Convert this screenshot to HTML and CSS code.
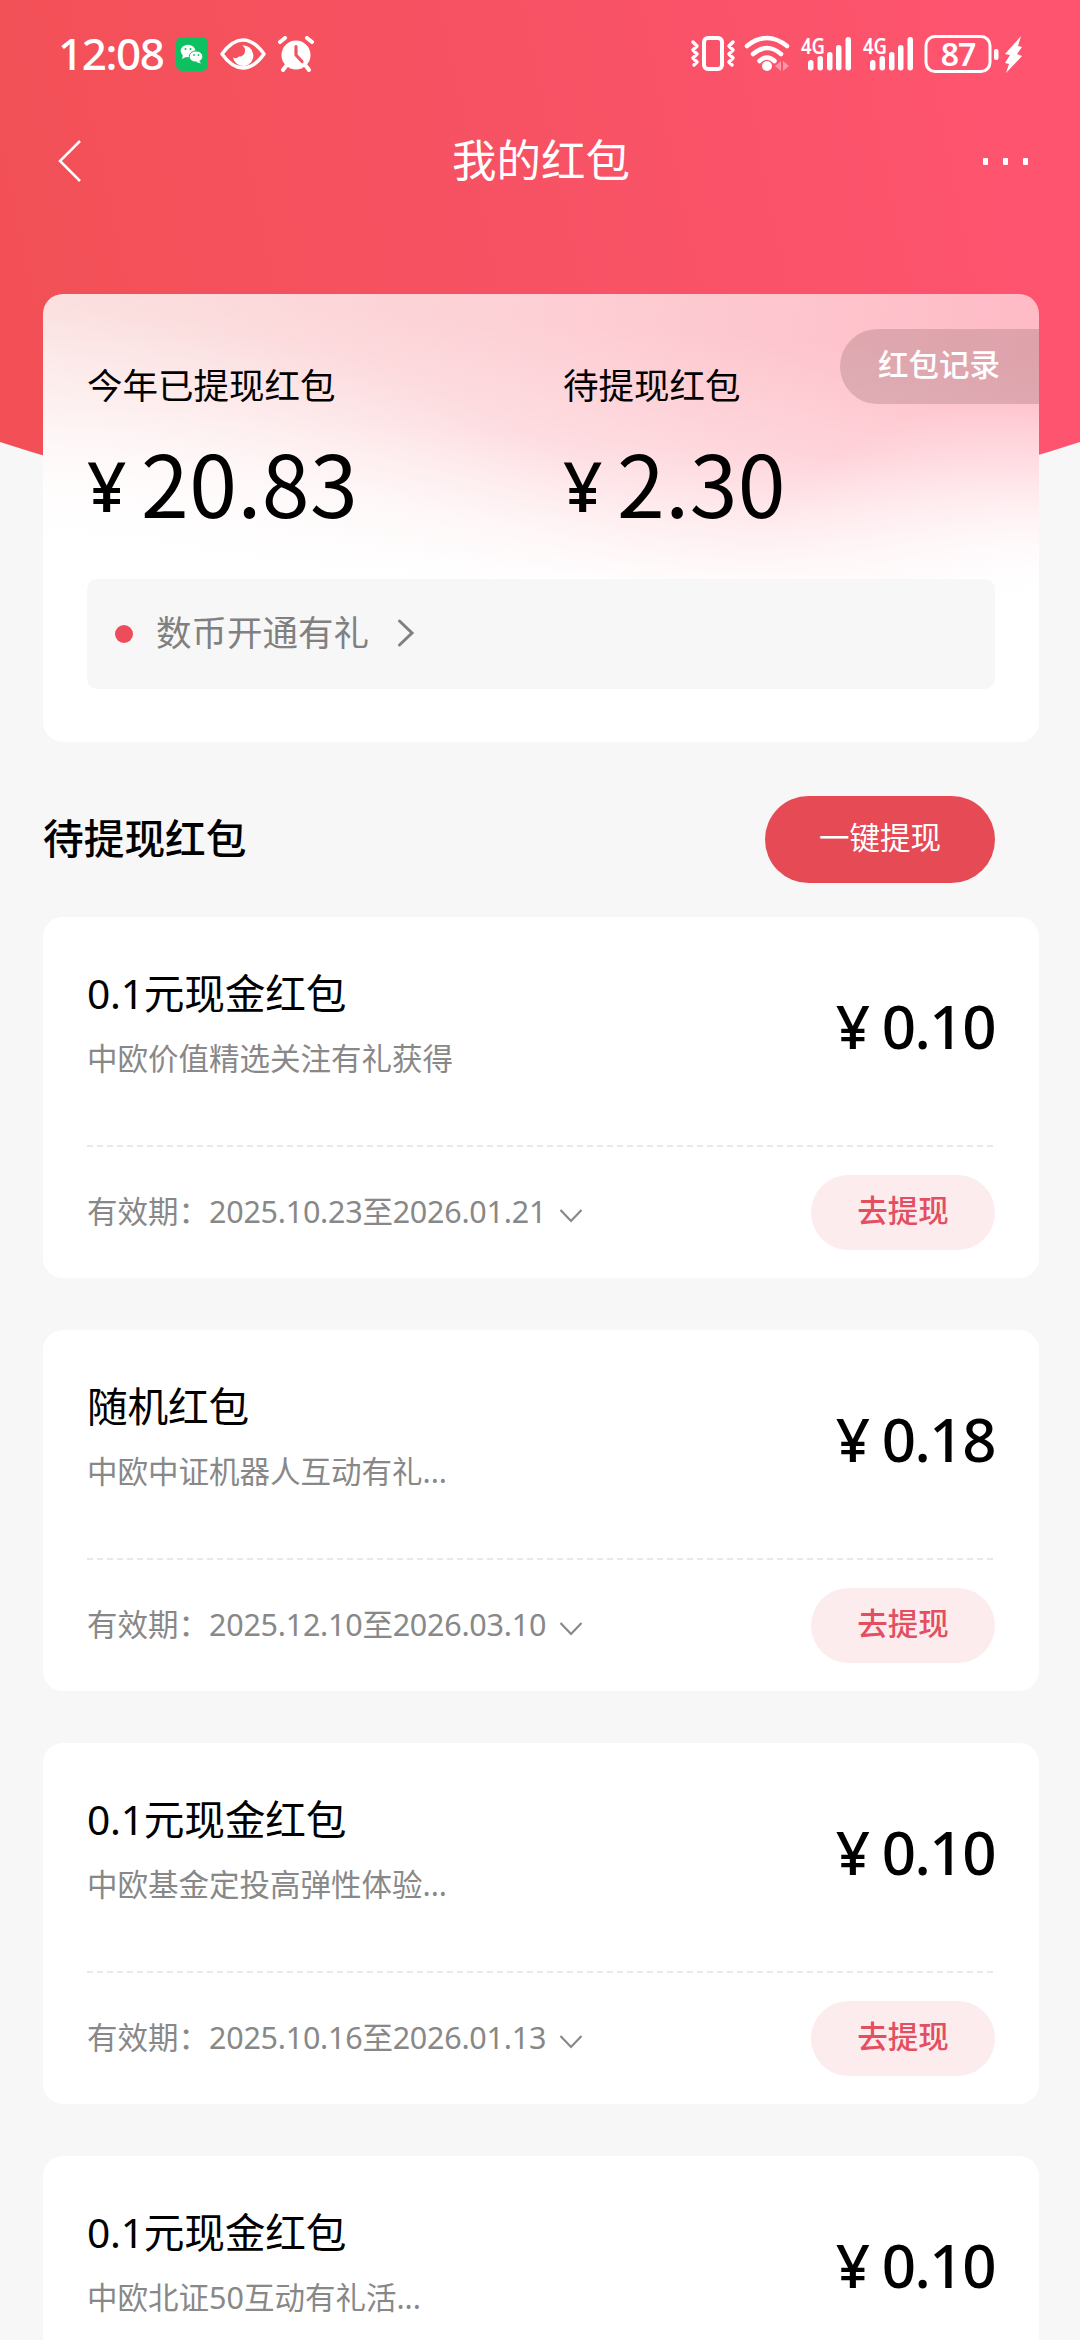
FILE: index.html
```html
<!DOCTYPE html>
<html lang="zh-CN">
<head>
<meta charset="utf-8">
<title>我的红包</title>
<link rel="stylesheet" href="styles.css">
</head>
<body>
<div class="page">
  <svg class="hero" width="1080" height="540" viewBox="0 0 1080 540">
    <defs>
      <linearGradient id="heroFill" gradientUnits="userSpaceOnUse" x1="0" y1="300" x2="1060" y2="80">
        <stop offset="0" stop-color="#f25056"/>
        <stop offset="0.5" stop-color="#f75264"/>
        <stop offset="1" stop-color="#ff5470"/>
      </linearGradient>
    </defs>
    <path d="M0 0H1080V442Q810 530 540 530T0 442Z" fill="url(#heroFill)"/>
  </svg>

  <header class="status">
    <div class="status-left">
      <span class="clock">12:08</span>
      <svg width="34" height="34" viewBox="0 0 34 34"><rect x="1" y="0" width="32" height="34" rx="6" fill="#0dc160"/><ellipse cx="13" cy="14" rx="7.300" ry="6.300" fill="#fff"/><path d="M8 18l-1 4 4-2z" fill="#fff"/><ellipse cx="21" cy="19.500" rx="6.800" ry="5.600" fill="#fff" stroke="#0dc160" stroke-width="1"/><path d="M24 23.500l2 3-5-1.500z" fill="#fff"/><g fill="#0dc160"><circle cx="10.500" cy="12" r="1"/><circle cx="15.500" cy="12" r="1"/><circle cx="19" cy="18" r=".9"/><circle cx="23.500" cy="18" r=".9"/></g></svg>
      <svg class="eye" width="46" height="34" viewBox="0 0 46 34"><path d="M2 17Q12 3 23 3T44 17Q34 31 23 31T2 17Z" fill="none" stroke="#fff" stroke-width="3.500" stroke-linejoin="round"/><path d="M22 8.500A10.300 10.300 0 1 1 13 20.500A5 5 0 0 0 19 19.500A5.500 5.500 0 0 0 25 14.500A5.500 5.500 0 0 0 22 8.500Z" fill="#fff"/></svg>
      <svg class="alarm" width="36" height="36" viewBox="0 0 36 36"><circle cx="18" cy="19" r="14.500" fill="#fff"/><path d="M2 6L7 2M34 6L29 2M8 30L5 34M28 30L31 34" stroke="#fff" stroke-width="4" stroke-linecap="round"/><path d="M18 10.500V19L24 25.500" fill="none" stroke="#f45360" stroke-width="3.200" stroke-linecap="round" stroke-linejoin="round"/></svg>
    </div>
    <svg class="status-right" width="334" height="40" viewBox="0 0 334 40" fill="#fff">
      <rect x="13" y="4" width="18" height="31" rx="4" fill="none" stroke="#fff" stroke-width="4"/>
      <path d="M2 8l4 4-4 4 4 4-4 4 4 4-3 3M42 8l-4 4 4 4-4 4 4 4-4 4 3 3" fill="none" stroke="#fff" stroke-width="3.500" stroke-linejoin="round" stroke-linecap="round"/>
      <path d="M56 12Q76-4 96 12M62 20Q76 8 90 20M68.500 27Q76 20 83.500 27" fill="none" stroke="#fff" stroke-width="4.500" stroke-linecap="round"/>
      <circle cx="76" cy="32" r="5"/>
      <path d="M84 32l6-5v10zM98 32l-6-5v10z" opacity=".4"/>
      <g id="bars">
        <rect x="117" y="26" width="5.500" height="10.500" rx="2.700"/><rect x="126.500" y="22" width="5.500" height="14.500" rx="2.700"/><rect x="136" y="18" width="5.500" height="18.500" rx="2.700"/><rect x="145" y="11" width="5.500" height="25.500" rx="2.700"/><rect x="154.500" y="3" width="5.500" height="33.500" rx="2.700"/>
      </g>
      <use href="#bars" x="62"/>
      <text class="net" x="110" y="19.500" textLength="24" lengthAdjust="spacingAndGlyphs">4G</text>
      <text class="net" x="172" y="19.500" textLength="24" lengthAdjust="spacingAndGlyphs">4G</text>
      <rect x="235" y="2.500" width="64" height="35" rx="9" fill="none" stroke="#fff" stroke-width="3"/>
      <text class="battery" x="267" y="31.500" text-anchor="middle">87</text>
      <rect x="303" y="15" width="4.500" height="11" rx="2"/>
      <path d="M330 2L314 20l5 1-5 8 4 1-3 9L331 22l-5-2 5-7-4-1z"/>
    </svg>
  </header>

  <nav class="navbar">
    <svg width="24" height="44" viewBox="0 0 24 44"><path d="M22 2L2 22L22 42" fill="none" stroke="#fff" stroke-width="2.500"/></svg>
    <h1 class="nav-title">我的红包</h1>
    <span class="more"><i></i><i></i><i></i></span>
  </nav>

  <main class="content">
    <section class="summary">
      <div class="totals">
        <div class="total">
          <div class="label">今年已提现红包</div>
          <div class="sum"><span class="yen">¥</span><span class="digits">20.83</span></div>
        </div>
        <div class="total">
          <div class="label">待提现红包</div>
          <div class="sum"><span class="yen">¥</span><span class="digits">2.30</span></div>
        </div>
        <div class="record">红包记录</div>
      </div>
      <div class="promo">
        <span class="dot"></span>
        <span>数币开通有礼</span>
        <svg width="18" height="30" viewBox="0 0 18 30"><path d="M2.500 3L15 15L2.500 27" fill="none" stroke="#808080" stroke-width="3" stroke-linecap="round"/></svg>
      </div>
    </section>

    <div class="section-head">
      <h2>待提现红包</h2>
      <div class="withdraw-all">一键提现</div>
    </div>

    <section class="list">
      <article class="item">
        <div class="item-top">
          <div><div class="name">0.1元现金红包</div><div class="source">中欧价值精选关注有礼获得</div></div>
          <div class="amount"><span class="yen">¥</span><span>0.10</span></div>
        </div>
        <div class="item-bottom">
          <div class="valid">有效期：<span class="dates">2025.10.23至2026.01.21</span><svg width="24" height="16" viewBox="0 0 24 16"><path d="M1.500 2L12 13L22.500 2" fill="none" stroke="#888" stroke-width="2.200"/></svg></div>
          <div class="withdraw">去提现</div>
        </div>
      </article>
      <article class="item">
        <div class="item-top">
          <div><div class="name">随机红包</div><div class="source">中欧中证机器人互动有礼...</div></div>
          <div class="amount"><span class="yen">¥</span><span>0.18</span></div>
        </div>
        <div class="item-bottom">
          <div class="valid">有效期：<span class="dates">2025.12.10至2026.03.10</span><svg width="24" height="16" viewBox="0 0 24 16"><path d="M1.500 2L12 13L22.500 2" fill="none" stroke="#888" stroke-width="2.200"/></svg></div>
          <div class="withdraw">去提现</div>
        </div>
      </article>
      <article class="item">
        <div class="item-top">
          <div><div class="name">0.1元现金红包</div><div class="source">中欧基金定投高弹性体验...</div></div>
          <div class="amount"><span class="yen">¥</span><span>0.10</span></div>
        </div>
        <div class="item-bottom">
          <div class="valid">有效期：<span class="dates">2025.10.16至2026.01.13</span><svg width="24" height="16" viewBox="0 0 24 16"><path d="M1.500 2L12 13L22.500 2" fill="none" stroke="#888" stroke-width="2.200"/></svg></div>
          <div class="withdraw">去提现</div>
        </div>
      </article>
      <article class="item">
        <div class="item-top">
          <div><div class="name">0.1元现金红包</div><div class="source">中欧北证50互动有礼活...</div></div>
          <div class="amount"><span class="yen">¥</span><span>0.10</span></div>
        </div>
      </article>
    </section>
  </main>
</div>
</body>
</html>
```
FILE: styles.css
```css
* { box-sizing: border-box; }

body {
  margin: 0;
  font-family: "Noto Sans", "Noto Sans CJK SC", sans-serif;
  color: #000;
  background: #f7f7f7;
}

h1, h2 { margin: 0; }
svg { display: block; flex: none; }

.page {
  position: relative;
  width: 1080px;
  height: 2340px;
  overflow: hidden;
}

.hero {
  position: absolute;
  left: 0;
  top: 0;
  z-index: -1;
}

.status {
  display: flex;
  justify-content: space-between;
  height: 108px;
  padding: 34px 55px 0 58px;
}

.status-left {
  display: flex;
  align-items: center;
  height: 40px;
}

.clock {
  width: 117px;
  margin-top: -2px;
  font-size: 44px;
  font-weight: 500;
  line-height: 40px;
  letter-spacing: -1.4px;
  color: #fff;
}

.eye { margin-left: 11px; }
.alarm { margin-left: 12px; }

.net { font-size: 21px; font-weight: 600; }
.battery { font-size: 32px; font-weight: 600; letter-spacing: -1px; }

.status-right { overflow: visible; }

.navbar {
  display: flex;
  align-items: center;
  justify-content: space-between;
  height: 105px;
  padding: 0 51px 0 58px;
}

.nav-title {
  margin: -2px 5px 0 0;
  font-size: 44.5px;
  font-weight: 400;
  line-height: 60px;
  color: #fff;
}

.more { display: flex; gap: 15px; width: 46px; margin: 2px 0 0 -22px; }
.more i { width: 5px; height: 7px; flex: none; border-radius: 1px; background: #fff; }

.content { padding: 81px 41px 0 43px; }

.summary {
  height: 448px;
  padding: 65px 44px 0;
  border-radius: 20px;
  background:
    linear-gradient(184deg, rgba(255, 255, 255, 0) 12%, rgba(255, 255, 255, .28) 34%, rgba(255, 255, 255, .72) 50%, #fff 63%),
    radial-gradient(ellipse 300px 220px at 100% 72%, #fff 10%, rgba(255, 255, 255, 0) 100%),
    radial-gradient(ellipse 620px 320px at 0 75%, #fff 20%, rgba(255, 255, 255, 0) 100%),
    linear-gradient(100deg, #fbe0df, #fdced4 50%, #ffb8c4);
}

.totals {
  position: relative;
  display: flex;
  height: 220px;
}

.total { flex: none; width: 476px; }

.label {
  font-size: 35.5px;
  line-height: 52px;
}

.sum {
  display: flex;
  align-items: baseline;
  margin-top: 16px;
  font-size: 86px;
  line-height: 108px;
}

.sum .digits {
  font-family: "Noto Sans CJK SC", sans-serif;
  letter-spacing: .5px;
}

.sum .yen {
  position: relative;
  top: -6px;
  width: 54px;
  font-size: 69px;
  font-weight: 500;
}

.record {
  position: absolute;
  right: -44px;
  top: -30px;
  width: 199px;
  height: 75px;
  padding-left: 38px;
  border-radius: 38px 0 0 38px;
  background: rgba(150, 105, 110, .3);
  font-size: 30.5px;
  font-weight: 500;
  line-height: 70px;
  color: #fff;
}

.promo {
  display: flex;
  align-items: center;
  height: 110px;
  padding: 0 28px;
  border-radius: 10px;
  background: #f7f7f7;
  font-size: 35.5px;
  line-height: 60px;
  color: #808080;
}

.promo span + span { margin-top: -4px; }

.promo .dot {
  width: 18px;
  height: 18px;
  margin-right: 23px;
  border-radius: 50%;
  background: #ef4c5b;
}

.promo svg { margin: -2px 0 0 28px; }

.section-head {
  display: flex;
  align-items: center;
  justify-content: space-between;
  height: 87px;
  margin: 54px 44px 34px 0;
}

.section-head h2 {
  margin-top: -4px;
  font-size: 40.7px;
  font-weight: 500;
  line-height: 80px;
}

.withdraw-all {
  width: 230px;
  height: 87px;
  border-radius: 44px;
  background: #e64a55;
  font-size: 30.5px;
  line-height: 83px;
  text-align: center;
  color: #fff;
}

.list {
  display: flex;
  flex-direction: column;
  gap: 52px;
}

.item {
  flex: none;
  height: 361px;
  padding: 0 44px;
  border-radius: 20px;
  background: #fff;
}

.item-top {
  display: flex;
  justify-content: space-between;
  height: 228px;
  padding-top: 46px;
}

.name {
  font-size: 40.7px;
  line-height: 60px;
  letter-spacing: -.2px;
}

.source {
  margin-top: 12px;
  font-size: 30.5px;
  line-height: 46px;
  color: #888;
}

.amount {
  display: flex;
  align-items: baseline;
  padding-top: 23px;
  font-size: 60px;
  font-weight: 500;
  line-height: 80px;
  letter-spacing: -1.5px;
}

.amount .yen { width: 46px; }

.item-bottom {
  display: flex;
  align-items: center;
  justify-content: space-between;
  height: 133px;
  background: repeating-linear-gradient(90deg, #e9e9e9 0 6px, transparent 6px 10px) top / 100% 2px no-repeat;
}

.valid {
  display: flex;
  align-items: center;
  margin-top: -2px;
  font-size: 30.5px;
  line-height: 46px;
  color: #888;
}

.dates { letter-spacing: -.25px; }

.valid svg { margin: 10px 0 0 13px; }

.withdraw {
  width: 184px;
  height: 75px;
  margin-top: 1px;
  border-radius: 38px;
  background: #fdecee;
  font-size: 30.5px;
  font-weight: 500;
  line-height: 71px;
  text-align: center;
  color: #e34f61;
}
```
